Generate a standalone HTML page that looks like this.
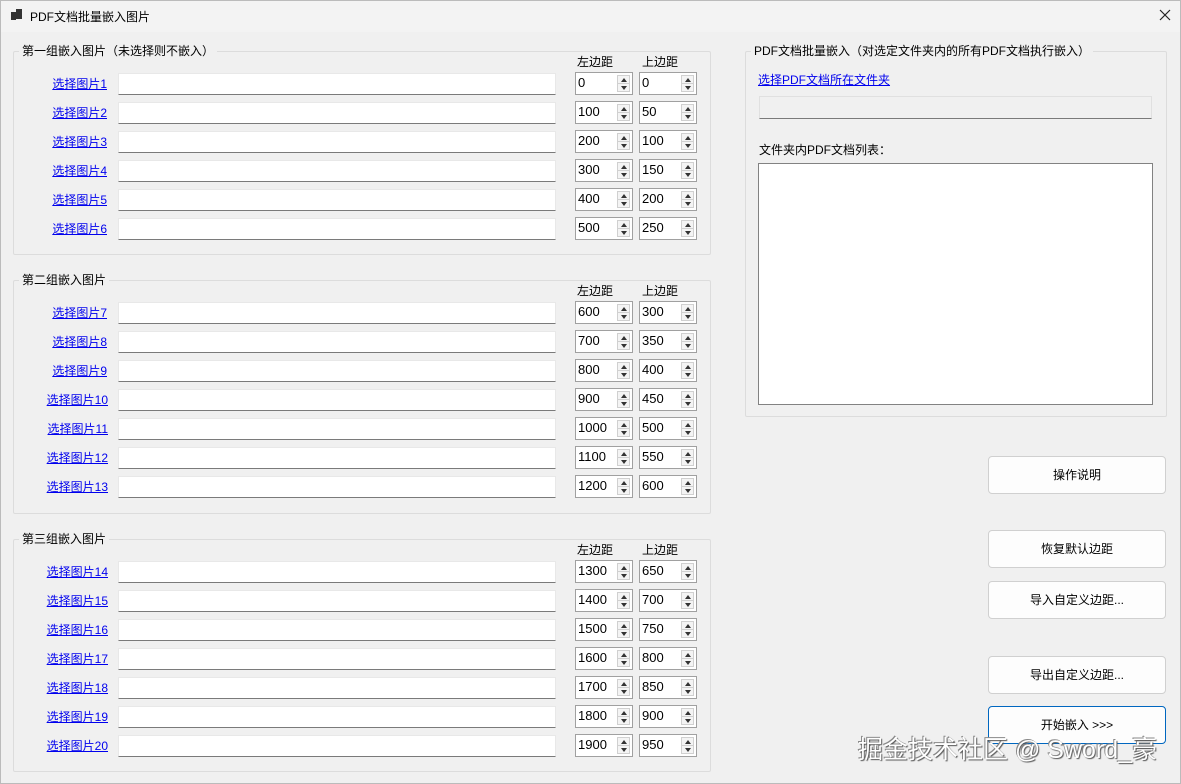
<!DOCTYPE html>
<html><head><meta charset="utf-8"><style>
*{margin:0;padding:0;box-sizing:border-box}
body{width:1181px;height:784px;background:#f0f0f0;font-family:"Liberation Sans","Microsoft YaHei","Noto Sans CJK SC",sans-serif;font-size:12px;color:#000;position:relative;overflow:hidden;box-shadow:inset 0 0 0 1px #bbb}
.a{position:absolute;white-space:nowrap}
.title{left:1px;top:1px;width:1179px;height:31px;background:#f3f3f3}
.gb{position:absolute;border:1px solid #dcdcdc;border-radius:2px}
.gl{position:absolute;background:#f0f0f0;padding:0 3px;font-size:12px;line-height:14px}
.lk{position:absolute;color:#0000ee;text-decoration:underline;text-align:right;width:80px;line-height:16px}
.tb{position:absolute;left:118px;width:438px;height:22px;background:#fff;border:1px solid #e8e8e8;border-bottom:1px solid #7a7a7a}
.sp{position:absolute;width:58px;height:23px;background:#fff;border:1px solid #a0a0a0;line-height:20px;padding-left:2px;font-size:13px}
.sp i{position:absolute;right:2px;top:2px;width:13px;height:17px;border:1px solid #d0d0d0;background:#f4f4f4}
.sp i:before{content:"";position:absolute;left:3px;top:2px;border:3px solid transparent;border-bottom:4px solid #333;border-top:0}
.sp i:after{content:"";position:absolute;left:3px;top:10px;border:3px solid transparent;border-top:4px solid #333;border-bottom:0}
.sp i b{position:absolute;left:0;right:0;top:7px;border-top:1px solid #d0d0d0}
.hd{position:absolute;font-size:12px}
.bt{position:absolute;left:988px;width:178px;height:38px;background:#fdfdfd;border:1px solid #d0d0d0;border-radius:4px;text-align:center;line-height:36px;font-size:12px}
</style></head><body>
<div class="a title"></div>
<div class="a" style="left:11px;top:12px;width:5px;height:5px;background:#333"></div>
<div class="a" style="left:16px;top:9px;width:6px;height:10px;background:#333"></div>
<div class="a" style="left:11px;top:17px;width:5px;height:3px;background:#333"></div>
<div class="a" style="left:30px;top:8px;font-size:12px">PDF文档批量嵌入图片</div>
<svg class="a" style="left:1159px;top:9px" width="12" height="12"><path d="M1 1L11 11M11 1L1 11" stroke="#222" stroke-width="1.2"/></svg>

<div class="gb" style="left:13px;top:51px;width:698px;height:204px"></div>
<div class="gl" style="left:19px;top:44px">第一组嵌入图片（未选择则不嵌入）</div>
<div class="gb" style="left:13px;top:280px;width:698px;height:234px"></div>
<div class="gl" style="left:19px;top:273px">第二组嵌入图片</div>
<div class="gb" style="left:13px;top:539px;width:698px;height:233px"></div>
<div class="gl" style="left:19px;top:532px">第三组嵌入图片</div>

<div class="hd" style="left:577px;top:53px">左边距</div><div class="hd" style="left:642px;top:53px">上边距</div>
<div class="hd" style="left:577px;top:282px">左边距</div><div class="hd" style="left:642px;top:282px">上边距</div>
<div class="hd" style="left:577px;top:541px">左边距</div><div class="hd" style="left:642px;top:541px">上边距</div>

<div class="lk" style="left:27px;top:76px">选择图片1</div><div class="tb" style="top:73px"></div><div class="sp" style="left:575px;top:72px">0<i><b></b></i></div><div class="sp" style="left:639px;top:72px">0<i><b></b></i></div>
<div class="lk" style="left:27px;top:105px">选择图片2</div><div class="tb" style="top:102px"></div><div class="sp" style="left:575px;top:101px">100<i><b></b></i></div><div class="sp" style="left:639px;top:101px">50<i><b></b></i></div>
<div class="lk" style="left:27px;top:134px">选择图片3</div><div class="tb" style="top:131px"></div><div class="sp" style="left:575px;top:130px">200<i><b></b></i></div><div class="sp" style="left:639px;top:130px">100<i><b></b></i></div>
<div class="lk" style="left:27px;top:163px">选择图片4</div><div class="tb" style="top:160px"></div><div class="sp" style="left:575px;top:159px">300<i><b></b></i></div><div class="sp" style="left:639px;top:159px">150<i><b></b></i></div>
<div class="lk" style="left:27px;top:192px">选择图片5</div><div class="tb" style="top:189px"></div><div class="sp" style="left:575px;top:188px">400<i><b></b></i></div><div class="sp" style="left:639px;top:188px">200<i><b></b></i></div>
<div class="lk" style="left:27px;top:221px">选择图片6</div><div class="tb" style="top:218px"></div><div class="sp" style="left:575px;top:217px">500<i><b></b></i></div><div class="sp" style="left:639px;top:217px">250<i><b></b></i></div>

<div class="lk" style="left:27px;top:305px">选择图片7</div><div class="tb" style="top:302px"></div><div class="sp" style="left:575px;top:301px">600<i><b></b></i></div><div class="sp" style="left:639px;top:301px">300<i><b></b></i></div>
<div class="lk" style="left:27px;top:334px">选择图片8</div><div class="tb" style="top:331px"></div><div class="sp" style="left:575px;top:330px">700<i><b></b></i></div><div class="sp" style="left:639px;top:330px">350<i><b></b></i></div>
<div class="lk" style="left:27px;top:363px">选择图片9</div><div class="tb" style="top:360px"></div><div class="sp" style="left:575px;top:359px">800<i><b></b></i></div><div class="sp" style="left:639px;top:359px">400<i><b></b></i></div>
<div class="lk" style="left:28px;top:392px">选择图片10</div><div class="tb" style="top:389px"></div><div class="sp" style="left:575px;top:388px">900<i><b></b></i></div><div class="sp" style="left:639px;top:388px">450<i><b></b></i></div>
<div class="lk" style="left:28px;top:421px">选择图片11</div><div class="tb" style="top:418px"></div><div class="sp" style="left:575px;top:417px">1000<i><b></b></i></div><div class="sp" style="left:639px;top:417px">500<i><b></b></i></div>
<div class="lk" style="left:28px;top:450px">选择图片12</div><div class="tb" style="top:447px"></div><div class="sp" style="left:575px;top:446px">1100<i><b></b></i></div><div class="sp" style="left:639px;top:446px">550<i><b></b></i></div>
<div class="lk" style="left:28px;top:479px">选择图片13</div><div class="tb" style="top:476px"></div><div class="sp" style="left:575px;top:475px">1200<i><b></b></i></div><div class="sp" style="left:639px;top:475px">600<i><b></b></i></div>

<div class="lk" style="left:28px;top:564px">选择图片14</div><div class="tb" style="top:561px"></div><div class="sp" style="left:575px;top:560px">1300<i><b></b></i></div><div class="sp" style="left:639px;top:560px">650<i><b></b></i></div>
<div class="lk" style="left:28px;top:593px">选择图片15</div><div class="tb" style="top:590px"></div><div class="sp" style="left:575px;top:589px">1400<i><b></b></i></div><div class="sp" style="left:639px;top:589px">700<i><b></b></i></div>
<div class="lk" style="left:28px;top:622px">选择图片16</div><div class="tb" style="top:619px"></div><div class="sp" style="left:575px;top:618px">1500<i><b></b></i></div><div class="sp" style="left:639px;top:618px">750<i><b></b></i></div>
<div class="lk" style="left:28px;top:651px">选择图片17</div><div class="tb" style="top:648px"></div><div class="sp" style="left:575px;top:647px">1600<i><b></b></i></div><div class="sp" style="left:639px;top:647px">800<i><b></b></i></div>
<div class="lk" style="left:28px;top:680px">选择图片18</div><div class="tb" style="top:677px"></div><div class="sp" style="left:575px;top:676px">1700<i><b></b></i></div><div class="sp" style="left:639px;top:676px">850<i><b></b></i></div>
<div class="lk" style="left:28px;top:709px">选择图片19</div><div class="tb" style="top:706px"></div><div class="sp" style="left:575px;top:705px">1800<i><b></b></i></div><div class="sp" style="left:639px;top:705px">900<i><b></b></i></div>
<div class="lk" style="left:28px;top:738px">选择图片20</div><div class="tb" style="top:735px"></div><div class="sp" style="left:575px;top:734px">1900<i><b></b></i></div><div class="sp" style="left:639px;top:734px">950<i><b></b></i></div>

<div class="gb" style="left:745px;top:51px;width:422px;height:366px"></div>
<div class="gl" style="left:751px;top:44px">PDF文档批量嵌入（对选定文件夹内的所有PDF文档执行嵌入）</div>
<div class="a" style="left:758px;top:71px;color:#0000ee;text-decoration:underline">选择PDF文档所在文件夹</div>
<div class="a" style="left:759px;top:96px;width:393px;height:23px;background:#f0f0f0;border:1px solid #e0e0e0;border-bottom:1px solid #7a7a7a"></div>
<div class="a" style="left:759px;top:141px">文件夹内PDF文档列表：</div>
<div class="a" style="left:758px;top:163px;width:395px;height:242px;background:#fff;border:1px solid #828282"></div>

<div class="bt" style="top:456px">操作说明</div>
<div class="bt" style="top:530px">恢复默认边距</div>
<div class="bt" style="top:581px">导入自定义边距...</div>
<div class="bt" style="top:656px">导出自定义边距...</div>
<div class="bt" style="top:706px;border:1px solid #0067c0">开始嵌入 &gt;&gt;&gt;</div>
<div class="a" style="left:858px;top:730px;font-size:25px;color:#fff;text-shadow:1px 1px 1px #555,-1px -1px 0 #888">掘金技术社区 @ Sword_豪</div>
</body></html>
